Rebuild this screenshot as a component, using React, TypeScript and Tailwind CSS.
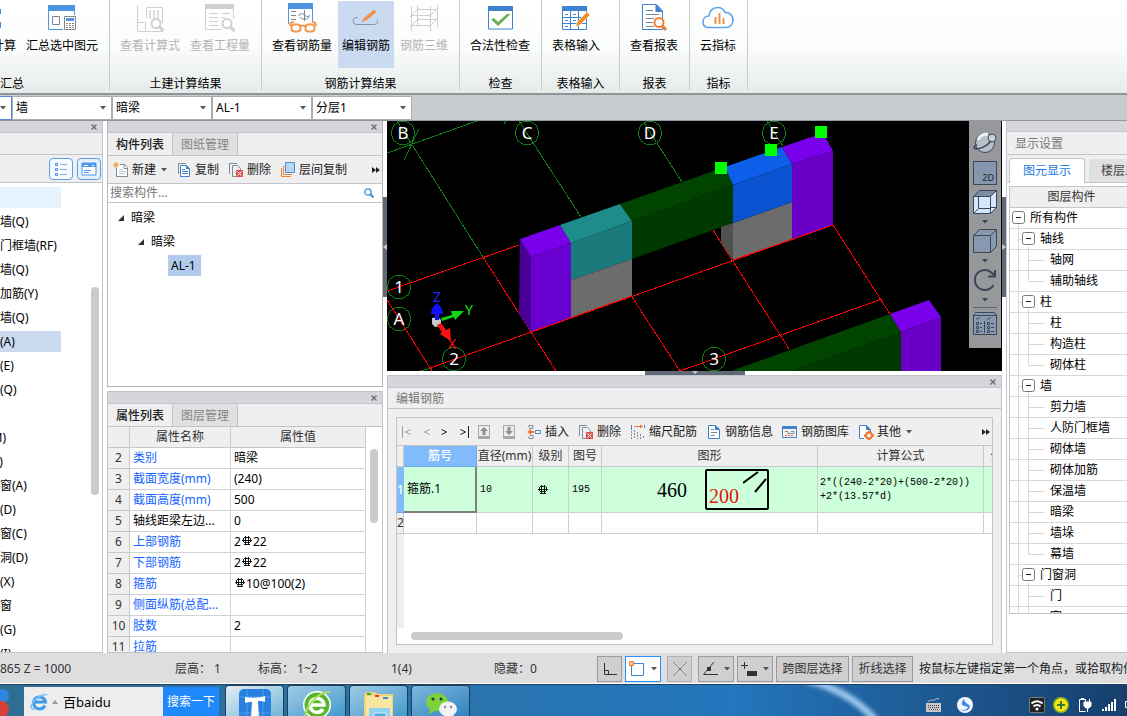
import type { ReactNode } from "react";
import clsx from "clsx";

/* ---------- ribbon icons (32x32) ---------- */

function Icon32({ children }: { children: ReactNode }) {
  return (
    <svg className="w-8 h-8 shrink-0" viewBox="0 0 32 32" fill="none">
      {children}
    </svg>
  );
}

const sumAllIcon = (
  <Icon32>
    <path d="M8 8h17v5H8zM8 21h17v6H8z" fill="#4a90e2" />
  </Icon32>
);

const sumSelectedIcon = (
  <Icon32>
    <path d="M2.500 5v23.500h26V5" stroke="#4f93e3" />
    <path d="M2 4h27v6H2z" fill="#4f93e3" />
    <path d="M6.500 15.500h7v8h-7z" stroke="#7d8790" />
    <path d="M17 14h14v17H17z" fill="#fff" />
    <path d="M18.500 15.500h11v13h-11z" stroke="#7d8790" />
    <path d="M20 17h8v3h-8z" fill="#4f93e3" />
    <path d="M20 22.500h9M20 24.500h9M20 26.500h9" stroke="#7d8790" strokeDasharray="2 1" />
    <path d="M20 22h2v1h-2zM20 24h2v1h-2z" fill="#f0903c" />
  </Icon32>
);

const formulaIcon = (
  <Icon32>
    <g stroke="#d0d0d0">
      <path d="M3.500 4v26.500h25V26M3.500 21.500h8v9M12.500 17v-10.500h16V22" />
      <path d="M15 10.500h10M15 13.500h10M15 16.500h10" strokeWidth="2" strokeDasharray="2 2" />
      <circle cx="22" cy="22.500" r="4.500" strokeWidth="2" fill="#fff" />
      <path d="M25.500 26l4 4" strokeWidth="3" />
    </g>
  </Icon32>
);

const quantityIcon = (
  <Icon32>
    <g stroke="#d0d0d0">
      <path d="M1.500 4v24.500h16M29.500 4v14" />
      <path d="M1 3h29v5H1z" fill="#d0d0d0" stroke="none" />
      <path d="M5 12.500h9M17 12.500h9M5 16.500h9M17 16.500h4M5 20.500h9M5 24.500h9" />
      <circle cx="23" cy="22.500" r="4.500" strokeWidth="2" fill="#fff" />
      <path d="M26.500 26l4 4" strokeWidth="3" />
    </g>
  </Icon32>
);

const viewRebarIcon = (
  <Icon32>
    <path d="M2.500 4v19M26.500 4v16" stroke="#4f93e3" />
    <path d="M2 2h25v6H2z" fill="#4f93e3" />
    <path d="M5 10.500h5M5 14.500h5M5 18.500h5" stroke="#7d8790" />
    <path d="M18.500 9v11M13 15c0-3 4-3 5.500-1s5 2 5 0M14 16c1 3 9 3 9-1" stroke="#7d8790" />
    <g stroke="#f49a4e" strokeWidth="2">
      <rect x="5.500" y="23.500" width="9" height="7" rx="3" />
      <rect x="19.500" y="23.500" width="9" height="7" rx="3" />
      <path d="M14 26c2-2 4-2 6 0M4 25c0-2 1-4 4-4M30 25c0-2-1-4-4-4" />
    </g>
  </Icon32>
);

const editRebarIcon = (
  <Icon32>
    <path d="M8 16.500H6.500a3.500 3.500 0 0 0 0 7h18c3 0 3.500-3 2.500-5" stroke="#8391a6" />
    <path d="M24 8.500l2.500 2.500L17 19l-5.500 2 3-4.500z" fill="#f4914a" />
  </Icon32>
);

const rebar3dIcon = (
  <Icon32>
    <g stroke="#cfcfcf">
      <path d="M3.500 5v25M9.500 4v22M22.500 5v25M29.500 4v22" />
      <path d="M9 8.500h20M3 14.500h20M9 18.500h20M3 24.500h20" />
      <path d="M2 16L11 7M21 16l9-9M2 26l9-9M21 26l9-9" />
    </g>
  </Icon32>
);

const checkIcon = (
  <Icon32>
    <path d="M4.500 6.500h24v21.500h-24z" fill="#fff" stroke="#3f82cf" />
    <path d="M4 5h25v5H4z" fill="#3f82cf" />
    <path d="M7 18.500l3-1.500 4 4 9-8h3.500L14 25z" fill="#6aaf52" />
  </Icon32>
);

const tableInputIcon = (
  <Icon32>
    <path d="M2.500 6v22.500h24V6" fill="#fff" stroke="#3f82cf" />
    <path d="M2 5h25v5H2z" fill="#3f82cf" />
    <path d="M2 16.500h24M2 22.500h24M10.500 10v18M18.500 10v18" stroke="#3f82cf" />
    <path d="M5 13.500h3M13 13.500h3M5 19.500h3M13 19.500h3M5 25.500h3" stroke="#3f82cf" />
    <path d="M27 11l3 3-9.500 9.500-5 2 2-5z" fill="#f08c28" stroke="#fff" strokeWidth=".5" />
  </Icon32>
);

const reportIcon = (
  <Icon32>
    <path d="M4.500 3.500h14l6 6v19h-20z" fill="#fff" stroke="#3f82cf" />
    <path d="M17.500 3l7.500 8h-7.500z" fill="#3f82cf" />
    <path d="M8 9.500h7M8 13.500h13M8 17.500h8M8 21.500h7M8 25.500h8" stroke="#7d8790" />
    <circle cx="21" cy="21.500" r="4.500" stroke="#f08030" strokeWidth="2" fill="#fff" />
    <path d="M24.500 25l3.500 4" stroke="#f08030" strokeWidth="3" />
  </Icon32>
);

const cloudIcon = (
  <Icon32>
    <path
      d="M7 26.500c-3.500 0-6-2-6-5.500s2.500-6 6-6c0-5 4-8.500 8.500-8.500 4 0 6.500 2 7.500 5 4.500-.5 8 3 8 7.500s-3 7.500-7 7.500z"
      stroke="#5aa5ee"
      strokeWidth="1.600"
      fill="#fff"
    />
    <path d="M13.500 16v7M17.500 12v11M21.500 17v6" stroke="#f0924e" strokeWidth="2" />
  </Icon32>
);

/* ---------- small toolbar icons (16x16) ---------- */

function Icon16({ children }: { children: ReactNode }) {
  return (
    <svg className="w-4 h-4 shrink-0" viewBox="0 0 16 16" fill="none">
      {children}
    </svg>
  );
}

const newIcon = (
  <Icon16>
    <path d="M3.500 6v8.500h11v-9l-3-3H7" fill="#fff" stroke="#7f8d98" />
    <path d="M11 2.500v4h4" stroke="#7f8d98" />
    <path d="M6 7.500h4M6 9.500h7M6 11.500h7" stroke="#c8ccd0" />
    <path d="M1 1l4 4M5 1L1 5M3 0v6M0 3h6" stroke="#e8a030" />
  </Icon16>
);

const copyIcon = (
  <Icon16>
    <path d="M2.500 12V1.500H10" stroke="#7f8d98" />
    <path d="M4.500 3.500h6l3 3v8h-9z" fill="#fff" stroke="#3f82cf" />
    <path d="M10 3v4h4z" fill="#3f82cf" />
    <path d="M6 7.500h3M6 9.500h6M6 11.500h6" stroke="#3f82cf" />
  </Icon16>
);

const deleteIcon = (
  <Icon16>
    <path d="M1.500 12V1.500H9" stroke="#7f8d98" />
    <path d="M8 14.500H4.500v-11h5l3 3V8" stroke="#7f8d98" />
    <path d="M8 8h7v7H8z" fill="#d9534f" />
    <path d="M9.500 9.500l4 4M13.500 9.500l-4 4" stroke="#fff" />
  </Icon16>
);

const layerCopyIcon = (
  <Icon16>
    <path d="M1.500 6v8.500H11M3.500 4v8.500H12" stroke="#f0802c" />
    <path d="M5.500 .5h9v10h-9z" fill="#b8d6f8" stroke="#4a8cd8" />
  </Icon16>
);

const moveUpIcon = (
  <Icon16>
    <path d="M2 1h12v14H2z" fill="#a8a8a8" />
    <path d="M3 2h10v10H3z" fill="#ececec" />
    <path d="M8 3l4 4H9.500v4h-3V7H4z" fill="#8f8f8f" />
  </Icon16>
);

const moveDownIcon = (
  <Icon16>
    <path d="M2 1h12v14H2z" fill="#a8a8a8" />
    <path d="M3 2h10v10H3z" fill="#ececec" />
    <path d="M8 11L4 7h2.500V3h3v4H12z" fill="#8f8f8f" />
  </Icon16>
);

const insertIcon = (
  <Icon16>
    <path d="M3 3.500V1.500h4v3H3M3 12v2.500h4v-3H4" stroke="#7f8d98" />
    <path d="M1 8l4-3v2h3v2H5v2z" fill="#f0782c" />
    <path d="M9.500 6.500h5v3h-5z" fill="#fff" stroke="#3f82cf" />
  </Icon16>
);

const scaleIcon = (
  <Icon16>
    <path d="M1.500 1v14M4.500 6v9M7.500 8v7M10.500 10v5M13.500 12v3" stroke="#7f8d98" strokeDasharray="2 1" />
    <path d="M4 2.500h8" stroke="#f0782c" />
    <path d="M10 .5l3 2-3 2z" fill="#f0782c" />
    <path d="M1.500 1v4M14.500 1v3" stroke="#3f82cf" />
  </Icon16>
);

const infoIcon = (
  <Icon16>
    <path d="M2.500 1.500h7l4 4v9h-11z" fill="#fff" stroke="#3f82cf" />
    <path d="M9 1v5h5z" fill="#3f82cf" />
    <path d="M5 5.500h3M5 8.500h6M5 11.500h4" stroke="#7f8d98" />
  </Icon16>
);

const galleryIcon = (
  <Icon16>
    <path d="M.5 2.500h14v11H.5z" fill="#f4f4f4" stroke="#3f82cf" />
    <path d="M0 2h15v3H0z" fill="#3f82cf" />
    <path d="M3 7.500h3v2h6v-2H9" stroke="#7f8d98" />
    <path d="M3 11.500h9" stroke="#e06040" strokeDasharray="2 1" />
  </Icon16>
);

const otherIcon = (
  <Icon16>
    <path d="M6 14.500H1.500v-13h7l4 4V8" fill="#fff" stroke="#3f82cf" />
    <path d="M8 1v5h5z" fill="#3f82cf" />
    <circle cx="11" cy="11.500" r="3" stroke="#f0782c" strokeWidth="2" />
    <path d="M11 6.500v2M11 14.500v2M6 11.500h2M14 11.500h2" stroke="#f0782c" strokeWidth="2" />
  </Icon16>
);

function Caret({ className = "text-[#555]" }: { className?: string }) {
  return (
    <svg className={clsx("w-1.5 h-1 shrink-0", className)} viewBox="0 0 6 4">
      <path d="M0 0h6L3 3.500z" fill="currentColor" />
    </svg>
  );
}

function More() {
  return (
    <button aria-label="more" className="ml-auto shrink-0">
      <svg className="w-2 h-2" viewBox="0 0 8 8">
        <path d="M0 1l4 3-4 3zM4 1l4 3-4 3z" fill="#222" />
      </svg>
    </button>
  );
}

/* HRB400 bar grade sign */
function Grade() {
  return (
    <svg className="mb-1 inline-block h-2.5 w-3" viewBox="0 0 12 10" fill="none" stroke="#000" role="img" aria-label="HRB400">
      <path d="M3 1.500h6M3 6.500h6M2.500 2v4M9.500 2v4M1 4.500h10M4.500 0v9M7.500 0v9M3 8.500h6" strokeWidth=".9" />
    </svg>
  );
}

function TitleBar() {
  return (
    <div className="flex h-3 shrink-0 items-center justify-end bg-[#d5d5db] border-b border-[#c3c3cb] pr-1">
      <button aria-label="close" className="p-px">
        <svg className="w-1.5 h-1.5" viewBox="0 0 6 6">
          <path d="M.5.5l5 5M5.500.5l-5 5" stroke="#6c6c74" strokeWidth="1.300" />
        </svg>
      </button>
    </div>
  );
}

/* ---------- ribbon ---------- */

type RibbonItem = { label: string; icon: ReactNode; state?: "active" | "disabled" };
type RibbonGroupDef = { label: string; width: string; items: RibbonItem[] };

const ribbon: RibbonGroupDef[] = [
  {
    label: "汇总",
    width: "w-[194px] -ml-[85px] justify-end pr-[7px]",
    items: [
      { label: "汇总计算", icon: sumAllIcon },
      { label: "汇总选中图元", icon: sumSelectedIcon },
    ],
  },
  {
    label: "土建计算结果",
    width: "w-[151px] pl-1.5",
    items: [
      { label: "查看计算式", icon: formulaIcon, state: "disabled" },
      { label: "查看工程量", icon: quantityIcon, state: "disabled" },
    ],
  },
  {
    label: "钢筋计算结果",
    width: "w-[197px] pl-1.5",
    items: [
      { label: "查看钢筋量", icon: viewRebarIcon },
      { label: "编辑钢筋", icon: editRebarIcon, state: "active" },
      { label: "钢筋三维", icon: rebar3dIcon, state: "disabled" },
    ],
  },
  { label: "检查", width: "w-[81px] pl-1.5", items: [{ label: "合法性检查", icon: checkIcon }] },
  { label: "表格输入", width: "w-[77px] pl-1.5", items: [{ label: "表格输入", icon: tableInputIcon }] },
  { label: "报表", width: "w-[69px] pl-1.5", items: [{ label: "查看报表", icon: reportIcon }] },
  { label: "指标", width: "w-[57px] pl-1.5", items: [{ label: "云指标", icon: cloudIcon }] },
];

function Ribbon() {
  return (
    <div className="flex h-[95px] shrink-0 overflow-hidden border-b-2 border-[#909498] bg-linear-to-b from-white via-[#fbfcfc] to-[#e6ebea]">
      {ribbon.map((g) => (
        <section key={g.label} className="flex h-[90px] shrink-0 flex-col border-r border-[#c8cccc]">
          <div className={clsx("flex gap-0.5 pt-px", g.width)}>
            {g.items.map((it) => (
              <button
                key={it.label}
                disabled={it.state === "disabled"}
                className={clsx(
                  "flex h-[67px] shrink-0 flex-col items-center px-1 leading-[26px] whitespace-nowrap",
                  it.state === "active" && "bg-[#c9daf1]",
                  it.state === "disabled" ? "text-[#b4b4b4]" : "text-black"
                )}
              >
                {it.icon}
                {it.label}
              </button>
            ))}
          </div>
          <div className={clsx("mt-2 text-center leading-4", g.label === "汇总" && "-ml-[85px]")}>{g.label}</div>
        </section>
      ))}
    </div>
  );
}

function Combo({ label, value }: { label: string; value: string }) {
  return (
    <div className="grid w-[100px] items-center border border-[#a9acb0] bg-white">
      <select aria-label={label} className="col-start-1 row-start-1 h-[22px] w-full appearance-none bg-transparent pl-[3px]">
        <option>{value}</option>
      </select>
      <span className="pointer-events-none col-start-1 row-start-1 mr-[5px] flex justify-end">
        <Caret />
      </span>
    </div>
  );
}

function ComboBar() {
  return (
    <div className="flex h-[26px] shrink-0 items-center border-b border-[#9296a0] bg-[#c8cbd0]">
      <button aria-label="floor" className="flex h-6 w-3 items-center border border-l-0 border-[#5b86d6] bg-white">
        <Caret />
      </button>
      <Combo label="构件类别" value="墙" />
      <Combo label="构件类型" value="暗梁" />
      <Combo label="构件名称" value="AL-1" />
      <Combo label="分层" value="分层1" />
    </div>
  );
}

/* ---------- navigation ---------- */

const navItems = [
  "剪力墙(Q)", "人防门框墙(RF)", "砌体墙(Q)", "砌体加筋(Y)", "保温墙(Q)", "暗梁(A)", "墙垛(E)", "幕墙(Q)", "",
  "门(M)", "窗(C)", "门联窗(A)", "墙洞(D)", "带形窗(C)", "带形洞(D)", "飘窗(X)", "老虎窗", "过梁(G)", "壁龛(I)",
];

function NavPanel() {
  return (
    <aside className="flex w-[103px] shrink-0 flex-col border-r border-b border-[#c3c3cb]">
      <TitleBar />
      <div className="h-[22px] shrink-0 border-b border-[#c3c3cb] bg-[#efefef]" />
      <div className="flex h-7 shrink-0 items-center justify-end gap-1 border-b border-[#c3c3cb] bg-[#efefef] pr-px">
        <button aria-label="list view" className="flex h-[22px] w-6 items-center justify-center rounded-sm border border-[#5a9fe6] bg-[#f6f9fd]">
          <Icon16>
            <path d="M2.500 2.500h2v2h-2zM2.500 7.500h2v2h-2zM2.500 12.500h2v2h-2z" stroke="#3f8de0" />
            <path d="M7 3.500h7M7 8.500h7M7 13.500h7" stroke="#7fb2ea" />
          </Icon16>
        </button>
        <button aria-label="card view" className="flex h-[22px] w-6 items-center justify-center rounded-sm border border-[#5a9fe6] bg-[#e6f1fd]">
          <Icon16>
            <path d="M1 2h14v12H1z" fill="#fff" stroke="#4a9af0" />
            <path d="M1 2h14v4H1z" fill="#4a9af0" />
            <path d="M3 9.500h7M3 11.500h5" stroke="#4a9af0" />
            <path d="M3 4.500h4M11 4.500h2" stroke="#fff" />
          </Icon16>
        </button>
      </div>
      <div className="flex min-h-0 flex-1 justify-between overflow-hidden pt-1">
        <ul className="w-[61px] whitespace-nowrap">
          <li className="mb-[3px] h-[21px] bg-[#e5f3ff]" />
          {navItems.map((t, i) => (
            <li key={i} className={clsx("mb-[3px] h-[21px] leading-[21px]", t === "暗梁(A)" && "bg-[#c9daf1]")}>
              <span className="-ml-6">{t}</span>
            </li>
          ))}
        </ul>
        <div className="mt-[100px] mr-[3px] h-[208px] w-2 rounded-full bg-[#cbcbcb]" />
      </div>
    </aside>
  );
}

/* ---------- component list ---------- */

function Tabs({ active, other }: { active: string; other: string }) {
  return (
    <div role="tablist" className="flex h-[23px] shrink-0 border-b border-[#c3c3cb] bg-[#efefef]">
      <button role="tab" aria-selected="true" className="w-16 pt-px font-medium text-[#222]">
        {active}
      </button>
      <button role="tab" aria-selected="false" className="w-[66px] border-x border-[#c3c3c6] bg-[#e0e0e1] pt-px text-[#858585]">
        {other}
      </button>
    </div>
  );
}

function ToolButton({ icon, children }: { icon: ReactNode; children: ReactNode }) {
  return (
    <button className="flex shrink-0 items-center gap-[3px] whitespace-nowrap text-[#222]">
      {icon}
      {children}
    </button>
  );
}

function Expander() {
  return (
    <svg className="w-1.5 h-1.5 shrink-0" viewBox="0 0 6 6">
      <path d="M6 0v6H0z" fill="#333" />
    </svg>
  );
}

function ComponentPanel() {
  return (
    <section className="flex h-[266px] shrink-0 flex-col border border-t-0 border-[#b4b4ba]">
      <TitleBar />
      <Tabs active="构件列表" other="图纸管理" />
      <div className="flex h-7 shrink-0 items-center gap-[9px] border-b border-[#c3c3cb] bg-[#efefef] pr-0.5 pl-[5px]">
        <ToolButton icon={newIcon}>
          新建
          <span className="ml-0.5">
            <Caret />
          </span>
        </ToolButton>
        <ToolButton icon={copyIcon}>复制</ToolButton>
        <ToolButton icon={deleteIcon}>删除</ToolButton>
        <ToolButton icon={layerCopyIcon}>层间复制</ToolButton>
        <More />
      </div>
      <div className="flex h-[19px] shrink-0 items-center border-b border-[#c3c3cb] pr-2 pl-0.5">
        <input aria-label="搜索构件" placeholder="搜索构件..." className="min-w-0 flex-1 bg-transparent outline-none placeholder:text-[#777]" />
        <svg className="w-2.5 h-2.5" viewBox="0 0 10 10" fill="none">
          <circle cx="4" cy="4" r="3.200" stroke="#3d8ecb" strokeWidth="1.300" />
          <path d="M6.500 6.500L9.500 9.500" stroke="#3d8ecb" strokeWidth="2" />
        </svg>
      </div>
      <ul className="pt-1 leading-[21px]">
        <li className="mb-[3px] flex items-center gap-[7px] pl-2.5">
          <Expander />
          暗梁
        </li>
        <li className="mb-[3px] flex items-center gap-[7px] pl-[30px]">
          <Expander />
          暗梁
        </li>
        <li className="pl-[60px]">
          <span className="inline-block w-[33px] bg-[#b1cbed] pl-[3px]">AL-1</span>
        </li>
      </ul>
    </section>
  );
}

const properties: { n: number; name: string; value: ReactNode; plain?: boolean }[] = [
  { n: 2, name: "类别", value: "暗梁" },
  { n: 3, name: "截面宽度(mm)", value: "(240)" },
  { n: 4, name: "截面高度(mm)", value: "500" },
  { n: 5, name: "轴线距梁左边...", value: "0", plain: true },
  { n: 6, name: "上部钢筋", value: <>2<Grade />22</> },
  { n: 7, name: "下部钢筋", value: <>2<Grade />22</> },
  { n: 8, name: "箍筋", value: <><Grade />10@100(2)</> },
  { n: 9, name: "侧面纵筋(总配...", value: "" },
  { n: 10, name: "肢数", value: "2" },
  { n: 11, name: "拉筋", value: "" },
];

function PropertyPanel() {
  return (
    <section className="mt-1 flex min-h-0 flex-1 flex-col border border-[#c3c3cb]">
      <TitleBar />
      <Tabs active="属性列表" other="图层管理" />
      <div className="flex min-h-0 flex-1 overflow-hidden">
        <table className="flex-1 table-fixed border-separate border-spacing-0 self-start whitespace-nowrap">
          <thead>
            <tr className="h-[21px] bg-[#efefef] text-[#333]">
              <th className="w-[22px] border-r border-b border-[#c8c8cc] p-0" />
              <th className="w-[101px] border-r border-b border-[#c8c8cc] p-0 font-normal">属性名称</th>
              <th className="border-r border-b border-[#c8c8cc] p-0 font-normal">属性值</th>
            </tr>
          </thead>
          <tbody>
            {properties.map((p) => (
              <tr key={p.n} className="h-[21px]">
                <td className="border-r border-b border-[#c8c8cc] bg-[#efefef] p-0 text-center text-[#333]">{p.n}</td>
                <td className={clsx("border-r border-b border-[#d2d2d2] p-0 pl-[3px]", p.plain ? "text-black" : "text-[#1464ff]")}>{p.name}</td>
                <td className="border-r border-b border-[#d2d2d2] p-0 pl-[3px]">{p.value}</td>
              </tr>
            ))}
          </tbody>
        </table>
        <div className="flex w-4 shrink-0 justify-center">
          <div className="mt-[22px] h-[74px] w-2 rounded-full bg-[#cbcbcb]" />
        </div>
      </div>
    </section>
  );
}

/* ---------- 3D view ---------- */

const axisLabels: [string, number, number][] = [
  ["B", 16, 12], ["C", 140, 12], ["D", 263, 12], ["E", 387, 12],
  ["1", 12, 166], ["A", 12, 198], ["2", 67, 238], ["3", 327, 238],
];

function Viewport() {
  return (
    <div className="flex h-[250px] shrink-0 overflow-hidden bg-black pr-px">
      <svg className="h-full min-w-0 flex-1" viewBox="0 0 582 250" preserveAspectRatio="xMinYMin slice">
        <g stroke="#0c7d14" fill="none" shapeRendering="crispEdges">
          <path d="M0 32L90 0M32 8L17 39M10 0L96 136M132 0L194 96M257 2L295 61M380 0L396 25M33 250l12-3M117 3l2-3" />
          {axisLabels.map(([t, x, y]) => (
            <path key={t} transform={`translate(${x} ${y})`} d="M-3.500-11.500h7l6 4 2.500 7.500-2.500 7.500-6 4h-7l-6-4-2.500-7.500 2.500-7.500z" />
          ))}
        </g>
        <path
          d="M0 170L132 124M43 247L446 104L503 193M326 109L402 228M495 178L293 250L245 176M96 136L169 250M0 179L45 250"
          stroke="#ff0000"
          fill="none"
          shapeRendering="crispEdges"
        />
        <g>
          <path d="M133 118l11 18v75l-12-18z" fill="#4a0095" />
          <path d="M144 136l40-14v75l-40 14z" fill="#6800d0" />
          <path d="M133 118l40-14 11 18-40 14z" fill="#7800ea" />
          <path d="M173 104l60-21 12 17-61 22z" fill="#1f8c8c" />
          <path d="M184 122l61-22v38l-61 21z" fill="#1b7b7c" />
          <path d="M184 159l61-21v37l-61 22z" fill="#6c6c6c" />
          <path d="M233 83l105-37 8 18-101 36z" fill="#004400" />
          <path d="M245 100l101-36v38l-101 36z" fill="#003a00" />
          <path d="M334 106l12-4v37l-12-17z" fill="#505050" />
          <path d="M346 102l59-21v37l-59 21z" fill="#6c6c6c" />
          <path d="M338 46l57-20 10 17-59 21z" fill="#0d5ee8" />
          <path d="M346 64l59-21v38l-59 21z" fill="#0a52cf" />
          <path d="M395 26l38-13 5 3 8 14-41 13z" fill="#7800ea" />
          <path d="M405 43l41-13v74l-41 14z" fill="#6800c8" />
          <path d="M344 250l159-57 11 18-109 39z" fill="#004400" />
          <path d="M405 250l109-39v39z" fill="#003a00" />
          <path d="M503 193l39-14 12 17-40 15z" fill="#7800ea" />
          <path d="M514 211l40-15v54h-40z" fill="#6800c8" />
        </g>
        <path d="M144 211L245 175M346 139L446 104" stroke="#ff0000" shapeRendering="crispEdges" />
        <path d="M328 41h12v12h-12zM378 23h12v12h-12zM428 5h12v12h-12z" fill="#00ff00" />
        <g fontFamily="Noto Sans, sans-serif" fontSize="17" fill="#fff" textAnchor="middle">
          {axisLabels.map(([t, x, y]) => (
            <text key={t} x={x} y={y + 6}>
              {t}
            </text>
          ))}
        </g>
        <g fontFamily="Noto Sans, sans-serif" fontSize="14" textAnchor="middle">
          <path d="M45 197l6-1 3 3v6l-6 1-3-3z" fill="#c8c8c8" />
          <path d="M48 199v-6h-4q0-6 6-11q6 5 6 11h-4v6z" fill="#1010ff" />
          <path d="M54 197l11-3-1-4 13 0-9 9-1-3-12 4z" fill="#10d810" />
          <path d="M50 204l4-2 5 7 4-2 1 13-11-7 2-2z" fill="#ff1010" />
          <text x="50" y="181" fill="#2020ff">Z</text>
          <text x="82" y="194" fill="#10e010">Y</text>
          <text x="65" y="228" fill="#ff1010">X</text>
        </g>
      </svg>
      <div className="flex h-[227px] w-8 shrink-0 flex-col items-center bg-[#96989c] pt-2.5">
        <button aria-label="orbit" className="h-6">
          <svg className="w-6 h-6" viewBox="0 0 24 24" fill="none" stroke="#3c4654">
            <circle cx="12" cy="12" r="9.500" fill="#b7bfca" />
            <path d="M5 9c2-5 7-7 10-5" stroke="#eef2f6" strokeWidth="3" />
            <circle cx="19" cy="7" r="4" fill="#c9d0d9" />
            <path d="M1 17c5 3 14-3 17-7M1 17c0-2 2-3 3-3" strokeWidth="1.500" />
          </svg>
        </button>
        <button aria-label="2D view" className="mt-1.5 flex h-6 w-6 items-end justify-end border border-[#3c4654] bg-[#8497ae] pr-0.5 text-[9px] leading-3 text-[#222]">
          2D
        </button>
        <button aria-label="wireframe" className="mt-[5px] flex flex-col items-center">
          <svg className="w-6 h-6" viewBox="0 0 24 24" fill="none" stroke="#3c4654">
            <path d="M.5 6.500l6-6h17v17l-6 6H.5z" fill="#d3e6fb" />
            <path d="M.5 6.500l6-6h17l-6 6z" fill="#7c8ca4" />
            <path d="M17.500 6.500v17M17.500 6.500l6-6M.5 6.500h17M5.500 6.500v12h12M.5 23.500l5-5M17.500 17.500h6" />
          </svg>
          <span className="flex h-[15px] items-center">
            <Caret className="text-[#3c4654]" />
          </span>
        </button>
        <button aria-label="solid" className="flex flex-col items-center">
          <svg className="w-6 h-6" viewBox="0 0 24 24" stroke="#3c4654">
            <path d="M.5 6.500l6-6h17v17l-6 6H.5z" fill="#8699b0" />
            <path d="M.5 6.500h17v17M17.500 6.500l6-6" fill="none" />
          </svg>
          <span className="flex h-[15px] items-center">
            <Caret className="text-[#3c4654]" />
          </span>
        </button>
        <button aria-label="rotate" className="flex flex-col items-center">
          <svg className="w-6 h-6" viewBox="0 0 24 24" fill="none" stroke="#3c4654" strokeWidth="2">
            <path d="M20.500 7a10 10 0 1 0 0 10" />
            <path d="M22 2v6.500h-7" />
          </svg>
          <span className="flex h-[15px] items-center">
            <Caret className="text-[#3c4654]" />
          </span>
        </button>
        <div className="h-[5px] w-6 border-t border-[#5c636c]" />
        <button aria-label="display options">
          <svg className="w-6 h-6" viewBox="0 0 24 24" fill="none" stroke="#3c4654">
            <path d="M.5 3.500l2-3h19l2 3v19H.5z" fill="#8699b0" />
            <path d="M.5 3.500h23M3 6l1.500 1.500L7 5M14 6l1.500 1.500L18 5M11.500 9v12" />
            <path d="M3.500 10.500h2v2h-2zM3.500 14.500h2v2h-2zM3.500 18.500h2v2h-2zM14.500 10.500h2v2h-2zM14.500 14.500h2v2h-2zM14.500 18.500h2v2h-2zM7 11.500h2M7 15.500h2M7 19.500h2M18 11.500h3M18 15.500h3M18 19.500h3" />
          </svg>
        </button>
      </div>
    </div>
  );
}

/* ---------- rebar editor ---------- */

const rebarHead = ["直径(mm)", "级别", "图号", "图形", "计算公式", "公"];
const cell = "border-r border-b border-[#d0d0d0] p-0";

function RebarTable() {
  return (
    <table className="w-full table-fixed border-separate border-spacing-0 overflow-hidden whitespace-nowrap">
      <colgroup>
        <col className="w-[7px]" />
        <col className="w-[73px]" />
        <col className="w-14" />
        <col className="w-9" />
        <col className="w-[33px]" />
        <col className="w-[216px]" />
        <col className="w-[166px]" />
        <col />
      </colgroup>
      <thead>
        <tr className="h-[21px] bg-[#efefef] text-[#333]">
          <th className="border-r border-b border-[#c8c8cc] p-0" />
          <th className="border-r border-b border-[#6fa8e8] bg-[#82bbfb] p-0 font-medium text-white">筋号</th>
          {rebarHead.map((h) => (
            <th
              key={h}
              className="overflow-hidden border-r border-b border-[#c8c8cc] p-0 font-normal last:border-r-0 last:pl-1.5 last:text-left"
            >
              {h}
            </th>
          ))}
        </tr>
      </thead>
      <tbody>
        <tr className="h-[46px] bg-[#ccffda]">
          <td className="overflow-hidden border-b border-[#6fa8e8] bg-[#82bbfb] p-0 font-medium text-white">1</td>
          <td className="border-r-2 border-b-2 border-[#808080] p-0 pl-[3px]">箍筋.1</td>
          <td className={clsx(cell, "pl-[3px] font-['Liberation_Mono',monospace] text-[10px]")}>10</td>
          <td className={clsx(cell, "pt-1 pl-1")}>
            <Grade />
          </td>
          <td className={clsx(cell, "pl-[3px] font-['Liberation_Mono',monospace] text-[10px]")}>195</td>
          <td className={cell}>
            <div className="flex items-center justify-end gap-[18px] pr-12 font-['Liberation_Serif',serif] text-[20px] leading-5">
              <span>460</span>
              <div className="flex h-[41px] w-16 items-end justify-between rounded-xs border-2 border-black pb-0.5 pl-0.5 text-[#e81010]">
                200
                <svg className="h-6 w-6 self-start" viewBox="0 0 24 24" stroke="#000" strokeWidth="2">
                  <path d="M0 12L15 1M12 21L23 8" />
                </svg>
              </div>
            </div>
          </td>
          <td className={clsx(cell, "pl-0.5 font-['Liberation_Mono',monospace] text-[10px] leading-[14px]")}>
            2*((240-2*20)+(500-2*20))
            <br />
            +2*(13.57*d)
          </td>
          <td className="border-b border-[#d0d0d0] p-0" />
        </tr>
        <tr className="h-[21px]">
          <td className="overflow-hidden border-r border-b border-[#c8c8cc] bg-[#efefef] p-0 text-[#333]">2</td>
          {[0, 1, 2, 3, 4, 5].map((i) => (
            <td key={i} className={cell} />
          ))}
          <td className="border-b border-[#d0d0d0] p-0" />
        </tr>
      </tbody>
    </table>
  );
}

function NavArrow({ label, bar, dir, dim }: { label: string; bar?: boolean; dir: "left" | "right"; dim?: boolean }) {
  return (
    <button aria-label={label} className={clsx("flex w-2.5 shrink-0 justify-center", dim ? "text-[#9a9a9a]" : "text-[#222]")}>
      <svg className={clsx("h-3 w-3 shrink-0", dir === "right" && "rotate-180")} viewBox="0 0 12 12" fill="none" stroke="currentColor">
        {bar && <path d="M1.500 0v12" />}
        <path d="M9.500 3.500L4.500 6l5 2.500" />
      </svg>
    </button>
  );
}

function RebarPanel() {
  return (
    <section className="flex min-h-0 flex-1 flex-col border border-b-0 border-[#c3c3cb] bg-[#efefef]">
      <TitleBar />
      <h2 className="h-[21px] shrink-0 border-b border-[#c3c3cb] pl-2 leading-[22px] text-[#777]">编辑钢筋</h2>
      <div className="mx-2 mt-2 mb-2 flex min-h-0 flex-1 flex-col border border-[#c3c3cb] bg-white">
        <div className="flex h-7 shrink-0 items-center gap-[9px] border-b border-[#c3c3cb] bg-[#efefef] pt-px pr-0.5 pl-[5px]">
          <NavArrow label="first" bar dir="left" dim />
          <NavArrow label="previous" dir="left" dim />
          <NavArrow label="next" dir="right" />
          <NavArrow label="last" bar dir="right" />
          <button aria-label="move up" className="-ml-0.5">{moveUpIcon}</button>
          <button aria-label="move down">{moveDownIcon}</button>
          <ToolButton icon={insertIcon}>插入</ToolButton>
          <ToolButton icon={deleteIcon}>删除</ToolButton>
          <ToolButton icon={scaleIcon}>缩尺配筋</ToolButton>
          <ToolButton icon={infoIcon}>钢筋信息</ToolButton>
          <ToolButton icon={galleryIcon}>钢筋图库</ToolButton>
          <ToolButton icon={otherIcon}>
            其他
            <span className="ml-0.5">
              <Caret />
            </span>
          </ToolButton>
          <More />
        </div>
        <RebarTable />
        <div className="w-[7px] flex-1 bg-[#efefef]" />
        <div className="flex h-4 shrink-0 items-center pl-3.5">
          <div className="h-2 w-[212px] rounded-full bg-[#cbcbcb]" />
        </div>
      </div>
    </section>
  );
}

/* ---------- display settings ---------- */

const layers: { t: string; level: 0 | 1 | 2; last?: boolean }[] = [
  { t: "所有构件", level: 0 },
  { t: "轴线", level: 1 },
  { t: "轴网", level: 2 },
  { t: "辅助轴线", level: 2, last: true },
  { t: "柱", level: 1 },
  { t: "柱", level: 2 },
  { t: "构造柱", level: 2 },
  { t: "砌体柱", level: 2, last: true },
  { t: "墙", level: 1 },
  { t: "剪力墙", level: 2 },
  { t: "人防门框墙", level: 2 },
  { t: "砌体墙", level: 2 },
  { t: "砌体加筋", level: 2 },
  { t: "保温墙", level: 2 },
  { t: "暗梁", level: 2 },
  { t: "墙垛", level: 2 },
  { t: "幕墙", level: 2, last: true },
  { t: "门窗洞", level: 1 },
  { t: "门", level: 2 },
  { t: "窗", level: 2 },
];

const guides = ["M8.500 17v4", "M8.500 0v21M8.500 10.500h4M18.500 17v4", "M8.500 0v21M18.500 0v21M18.500 10.500h16"];

function Guide({ level, last }: { level: 0 | 1 | 2; last?: boolean }) {
  return (
    <svg
      className={clsx("h-[21px] shrink-0", level === 0 && "w-5", level === 1 && "w-[30px]", level === 2 && "w-10")}
      viewBox={`0 0 ${20 + level * 10} 21`}
      fill="none"
    >
      <path d={last ? "M8.500 0v21M18.500 0v10.500h16" : guides[level]} stroke="#d8d8d8" />
      {level < 2 && (
        <g transform={`translate(${level * 10} 0)`}>
          <rect x="2.500" y="3.500" width="12" height="12" rx="2" fill="#fff" stroke="#7a7a7a" />
          <path d="M6 9.500h5" stroke="#222" />
        </g>
      )}
    </svg>
  );
}

function DisplayPanel() {
  return (
    <aside className="flex min-w-[120px] flex-1 flex-col overflow-hidden border-b border-l border-[#c3c3cb] whitespace-nowrap">
      <div className="h-[11px] shrink-0 border-b border-[#c3c3cb] bg-[#d5d5db]" />
      <h2 className="h-[23px] shrink-0 border-b border-[#c3c3cb] bg-[#efefef] pl-2 leading-6 text-[#777]">显示设置</h2>
      <div role="tablist" className="flex h-7 shrink-0 items-end gap-1 border-b border-[#c3c3cb] bg-[#efefef] pl-0.5">
        <button role="tab" aria-selected="true" className="-mb-px h-[25px] w-[76px] shrink-0 rounded-t-sm border border-b-0 border-[#c3c3cb] bg-white text-[#1f7ae0]">
          图元显示
        </button>
        <button role="tab" aria-selected="false" className="h-[23px] w-[72px] shrink-0 rounded-t-sm bg-[#e0e0e1] text-[#444]">
          楼层显示
        </button>
      </div>
      <div className="mt-[3px] ml-0.5 h-[428px] w-[124px] overflow-hidden border border-r-0 border-[#c3c3cb]">
        <div className="h-[21px] border-b border-[#c8c8cc] bg-[#efefef] text-center leading-[20px] text-[#333]">图层构件</div>
        <ul>
          {layers.map((l, i) => (
            <li key={i} className="flex h-[21px] items-center border-b border-[#d8d8d8]">
              <Guide level={l.level} last={l.last} />
              {l.t}
            </li>
          ))}
        </ul>
      </div>
    </aside>
  );
}

function Splitter({ side }: { side: "left" | "right" }) {
  return (
    <div className="w-1 shrink-0 bg-white pt-[76px]">
      <button aria-label="collapse panel" className="flex h-[100px] w-1 items-center bg-[#5f6a76]">
        <svg className="h-1.5 w-1" viewBox="0 0 4 6">
          <path d={side === "left" ? "M4 0L0 3l4 3z" : "M0 0l4 3-4 3z"} fill="#c8ccd0" />
        </svg>
      </button>
    </div>
  );
}

/* ---------- status bar and taskbar ---------- */

const statusBtn = "flex h-[26px] shrink-0 items-center justify-center gap-1.5 border border-[#9a9a9c] bg-[#cfcfd1] text-[#333]";

function StatusBar() {
  return (
    <footer className="flex h-[31px] shrink-0 items-center overflow-hidden border-b border-white bg-[#dededf] pt-px whitespace-nowrap text-[#333]">
      <div className="flex min-w-[597px] flex-1">
        <span className="w-[175px]">865 Z = 1000</span>
        <span className="w-[83px]">层高： 1</span>
        <span className="w-[133px]">标高： 1~2</span>
        <span className="w-[103px]">1(4)</span>
        <span>隐藏：0</span>
      </div>
      <div className="flex shrink-0 gap-[3px]">
        <button aria-label="ortho" className={clsx(statusBtn, "w-[25px]")}>
          <Icon16>
            <path d="M2.500 2v11.500H15M2.500 9.500h4v4" stroke="#333" />
          </Icon16>
        </button>
        <button aria-label="snap box" className="flex h-[26px] w-9 shrink-0 items-center justify-center gap-1.5 border border-[#2890f8] bg-white">
          <Icon16>
            <path d="M2.500 2.500h12v12h-12z" stroke="#3f82cf" />
            <path d="M.5.5h4v4h-4z" fill="#fbc9a4" stroke="#f0782c" />
          </Icon16>
          <Caret />
        </button>
        <button aria-label="intersection" className="mx-[3px] flex h-[26px] w-[25px] shrink-0 items-center justify-center border border-[#b0b0b2] bg-[#cfcfd1]">
          <Icon16>
            <path d="M1 1l14 14M15 1L1 15" stroke="#888" />
            <path d="M7 7h2v2H7z" fill="#666" />
          </Icon16>
        </button>
        <button aria-label="angle" className={clsx(statusBtn, "w-9")}>
          <Icon16>
            <path d="M12 1L1.500 13.500H16" stroke="#333" />
            <path d="M5 6h4v4H5z" fill="#333" />
          </Icon16>
          <Caret />
        </button>
        <button aria-label="offset" className={clsx(statusBtn, "w-9")}>
          <Icon16>
            <path d="M3.500 1v7M0 4.500h7" stroke="#333" />
            <path d="M6 10h10v5H6z" fill="#333" />
          </Icon16>
          <Caret />
        </button>
        <button className={clsx(statusBtn, "w-[73px]")}>跨图层选择</button>
        <button className={clsx(statusBtn, "w-[61px]")}>折线选择</button>
      </div>
      <span className="ml-1.5 w-[208px] shrink-0 overflow-hidden text-[#222]">按鼠标左键指定第一个角点，或拾取构件图元</span>
    </footer>
  );
}

const taskBtn = "flex h-full w-[59px] shrink-0 justify-center overflow-hidden rounded-t-sm border border-b-0 border-[#1d3f5c] pt-px";

function Taskbar() {
  return (
    <nav className="flex h-8 shrink-0 overflow-hidden border-t border-[#20405f] bg-linear-to-r from-[#2f6e92] via-[#2476bd] via-65% to-[#163f6c]">
      <svg className="h-8 w-6 shrink-0" viewBox="0 0 24 32">
        <circle cx="2" cy="11" r="7" fill="#2f86e0" />
        <circle cx="1" cy="24" r="8" fill="#d8403a" />
      </svg>
      <div className="mt-0.5 flex w-[139px] shrink-0 items-center gap-1 bg-[#ededee] pl-1.5">
        <svg className="h-[18px] w-[18px] shrink-0" viewBox="0 0 18 18" fill="none">
          <path d="M15 12.500a6 6 0 1 1 .5-3.500H5" stroke="#3a9bf0" strokeWidth="3" />
          <path d="M17 2c-3-2-12 3-15 9-2 4 0 6 3 5" stroke="#7cc0f6" strokeWidth="1.500" />
        </svg>
        <svg className="h-1 w-1.5 shrink-0" viewBox="0 0 6 4">
          <path d="M0 4l3-4 3 4z" fill="#999" />
        </svg>
        <input aria-label="地址" defaultValue="百baidu" className="ml-px min-w-0 flex-1 bg-transparent text-[13px] outline-none" />
      </div>
      <button className="mt-0.5 mr-1.5 w-14 shrink-0 bg-[#1f88fb] text-white">搜索一下</button>
      <div className="flex shrink-0 gap-[3px]">
        <button aria-label="GTJ" className={clsx(taskBtn, "bg-linear-to-br from-[#e4eef4] to-[#6fb5d9]")}>
          <svg className="mt-0.5 h-8 w-8" viewBox="0 0 32 32">
            <rect width="32" height="34" rx="5" fill="#2580e0" />
            <path d="M8 0v32M24 0v32M0 8h32M0 24h32" stroke="#4f9dec" />
            <path d="M6 8c7 1 14 1 20-1v6c-2-1-4-1-7-1l1 16h-8l1-15c-3 0-5 0-7 1z" fill="#fff" />
          </svg>
        </button>
        <button aria-label="browser" className={clsx(taskBtn, "bg-linear-to-br from-[#9fcbe6] to-[#3f9acb]")}>
          <svg className="mt-0.5 h-8 w-8" viewBox="0 0 32 32" fill="none">
            <circle cx="16" cy="16" r="14" fill="#fff" />
            <circle cx="16" cy="16" r="12.500" fill="#58b52e" />
            <path d="M22 20a7 7 0 1 1 1-4H10" stroke="#fff" strokeWidth="3.500" />
            <path d="M29 3C20 2 5 14 4 29" stroke="#a8e060" strokeWidth="2" />
          </svg>
        </button>
        <button aria-label="explorer" className={clsx(taskBtn, "bg-linear-to-br from-[#9fcbe6] to-[#3f9acb]")}>
          <svg className="mt-1 h-8 w-8" viewBox="0 0 32 32">
            <path d="M1 3l3-2h8l2 2h16v29H1z" fill="#f0d27a" />
            <path d="M3 5h26v27H3z" fill="#f8e6a2" />
            <path d="M4 2h4v2H4z" fill="#30a840" />
            <path d="M12 4h4v2h-4z" fill="#e04030" />
            <path d="M20 6h5v2h-5z" fill="#3088e0" />
            <path d="M6 17h21v15H6z" fill="#8fd2f2" />
            <path d="M11 22h12v10H11z" fill="#4fa8dc" stroke="#d6f0fc" />
          </svg>
        </button>
        <button aria-label="WeChat" className={clsx(taskBtn, "bg-linear-to-br from-[#7db8de] to-[#2f83c0]")}>
          <svg className="mt-1 h-8 w-8" viewBox="0 0 32 32">
            <ellipse cx="12" cy="11" rx="11" ry="9" fill="#7ed13c" />
            <path d="M5 17l-1 6 6-3z" fill="#7ed13c" />
            <circle cx="8" cy="8" r="1.500" fill="#234" />
            <circle cx="16" cy="8" r="1.500" fill="#234" />
            <ellipse cx="23" cy="18" rx="9" ry="7.500" fill="#f2f2f2" />
            <path d="M28 23l1 4-5-2z" fill="#f2f2f2" />
            <circle cx="20" cy="16" r="1.200" fill="#888" />
            <circle cx="26" cy="16" r="1.200" fill="#888" />
          </svg>
        </button>
      </div>
      <div className="flex min-w-0 flex-1 justify-center overflow-hidden">
        <svg className="h-8 w-[456px] shrink-0" viewBox="0 0 456 32">
          <defs>
            <filter id="soft" x="-20%" y="-20%" width="140%" height="140%">
              <feGaussianBlur stdDeviation="2" />
            </filter>
          </defs>
          <path d="M334 -6c32 8 56 22 74 44" stroke="#9ec8ee" strokeWidth="7" fill="none" filter="url(#soft)" />
        </svg>
      </div>
      <div className="flex shrink-0 items-center gap-2 pt-2">
        <svg className="h-4 w-4" viewBox="0 0 16 16" fill="none">
          <path d="M1 6h15v9H1z" fill="#c8c8c8" />
          <path d="M3 8.500h11M3 10.500h11M4 12.500h9" stroke="#444" strokeDasharray="1 1" />
          <path d="M3 5c1-3 4-1 6-2s3-2 5-1" stroke="#c8c8c8" />
        </svg>
        <span className="w-0" />
        <svg className="h-4 w-4" viewBox="0 0 16 16">
          <circle cx="8" cy="8" r="8" fill="#f4f8ff" />
          <path d="M7 2C4 5 4 8 7 9l4 1c-1 3-5 4-8 2 3 3 9 2 10-2 0-3-5-3-6-8z" fill="#4a86e8" />
        </svg>
        <span className="w-10" />
        <svg className="h-4 w-4" viewBox="0 0 16 16" fill="none">
          <rect x=".5" y=".5" width="15" height="15" rx="1" fill="#222" stroke="#777" />
          <path d="M2.500 6.500c3-3 8-3 11 0M4.500 9.500c2-2 5-2 7 0" stroke="#fff" strokeWidth="1.800" />
          <circle cx="8" cy="12" r="1.500" fill="#fff" />
        </svg>
        <svg className="h-4 w-4" viewBox="0 0 16 16">
          <circle cx="8" cy="8" r="8" fill="#8ab820" />
          <circle cx="8" cy="8" r="6.500" fill="#ffe010" />
          <path d="M8 4v8M4 8h8" stroke="#288028" strokeWidth="2" />
        </svg>
        <svg className="h-4 w-4" viewBox="0 0 16 16" fill="none" stroke="#fff">
          <path d="M8 2.500H2.500v12h6M4 1.500h3" />
          <path d="M7 5h7v4l-2 2H9L7 9z" fill="#fff" />
          <path d="M8.500 2v3M12.500 2v3M10.500 11v4" />
        </svg>
        <svg className="h-4 w-4" viewBox="0 0 16 16" fill="#fff">
          <path d="M1 12h2v2H1zM4 10h2v4H4zM7 7h2v7H7zM10 5h2v9h-2zM13 2h2v12h-2z" />
        </svg>
        <svg className="h-4 w-0.5" viewBox="0 0 2 16" fill="none" stroke="#fff">
          <path d="M2 4.500H.5v6H2" />
        </svg>
      </div>
    </nav>
  );
}

export default function App() {
  return (
    <div className="flex h-screen flex-col overflow-hidden bg-white font-['Noto_Sans','Noto_Sans_CJK_SC',sans-serif] text-[12px] leading-4 text-black">
      <Ribbon />
      <ComboBar />
      <main className="flex min-h-0 flex-1">
        <NavPanel />
        <div className="ml-1 flex w-[276px] shrink-0 flex-col">
          <ComponentPanel />
          <PropertyPanel />
        </div>
        <Splitter side="left" />
        <div className="flex min-w-0 flex-1 flex-col">
          <Viewport />
          <div className="flex h-1 shrink-0 justify-center">
            <button aria-label="collapse editor" className="flex w-[100px] justify-center bg-[#5f6a76]">
              <svg className="h-1 w-1.5" viewBox="0 0 6 4">
                <path d="M0 0h6L3 3z" fill="#c8ccd0" />
              </svg>
            </button>
          </div>
          <RebarPanel />
        </div>
        <Splitter side="right" />
        <div className="flex w-[121px] shrink-0">
          <DisplayPanel />
        </div>
      </main>
      <StatusBar />
      <Taskbar />
    </div>
  );
}
